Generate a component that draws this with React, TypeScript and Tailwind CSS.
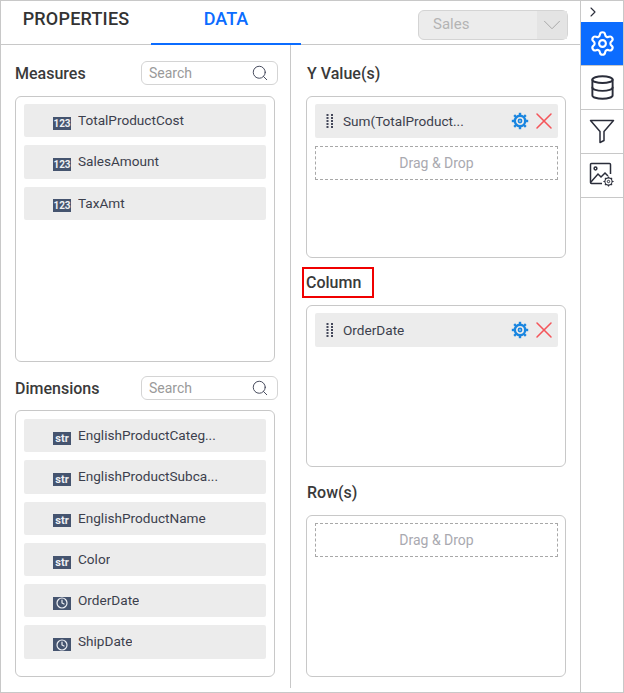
import React from "react";
import { Search, ChevronRight, ChevronDown, Settings, Database, X, Clock } from "lucide-react";

function Badge({ kind }: { kind: "123" | "str" | "date" }) {
  return (
    <span className={`mt-[5px] flex h-[13px] w-[18px] shrink-0 items-center justify-center bg-[#45546f] leading-[13px] font-bold text-[#eef0f4] ${kind === "123" ? "text-[10px]" : "text-[11px]"}`}>
      {kind === "date" ? <Clock size={12} strokeWidth={2.4} /> : kind}
    </span>
  );
}

function FieldItem({ kind, label }: { kind: "123" | "str" | "date"; label: string }) {
  return (
    <div className="flex h-[33.3px] items-center gap-[7px] rounded-[2px] bg-[#ececec] pl-[29px] text-[13.6px] text-[#3c3f4d]">
      <Badge kind={kind} />
      <span className="mb-[1px] truncate">{label}</span>
    </div>
  );
}

function Grip() {
  return (
    <svg width="8" height="14" viewBox="0 0 8 14" className="shrink-0" fill="#44485a">
      {[0, 3, 6, 9, 12].map((y) => (
        <React.Fragment key={y}>
          <rect x="0.5" y={y} width="2" height="2" />
          <rect x="5" y={y} width="2" height="2" />
        </React.Fragment>
      ))}
    </svg>
  );
}

function BlueGear() {
  return (
    <svg width="18" height="18" viewBox="0 0 18 18" className="shrink-0" fill="none" stroke="#1a86e0">
      <circle cx="9" cy="9" r="5.2" strokeWidth="2.4" />
      <circle cx="9" cy="9" r="1.6" strokeWidth="1.6" />
      <g strokeWidth="2.4">
        <path d="M9 0.8V3.4" />
        <path d="M9 14.6V17.2" />
        <path d="M0.8 9H3.4" />
        <path d="M14.6 9H17.2" />
        <path d="M3.2 3.2L5 5" />
        <path d="M13 13L14.8 14.8" />
        <path d="M14.8 3.2L13 5" />
        <path d="M5 13L3.2 14.8" />
      </g>
    </svg>
  );
}

function ValueItem({ label }: { label: string }) {
  return (
    <div className="flex h-[34px] items-center rounded-[2px] bg-[#ececec] pl-[11px] text-[13.6px] text-[#3c3f4d]">
      <Grip />
      <span className="ml-[9px] flex-1 truncate">{label}</span>
      <BlueGear />
      <X size={28} strokeWidth={1.3} className="ml-[1px] shrink-0 text-[#f4555a]" />
    </div>
  );
}

function DropZone() {
  return (
    <div className="flex h-[34px] items-center justify-center border border-dashed border-[#a8a8a8] text-[14px] text-[#a9a9b0]">
      Drag &amp; Drop
    </div>
  );
}

function SearchBox() {
  return (
    <div className="flex h-[24px] w-[137px] items-center justify-between rounded-[6px] border border-[#d4d4d4] pl-[7px] pr-[8px] text-[14px] text-[#9a9a9a]">
      <span>Search</span>
      <Search size={18} strokeWidth={1.3} className="text-[#44485a]" />
    </div>
  );
}

function Heading({ children }: { children: React.ReactNode }) {
  return <div className="h-[24px] text-[16px] leading-[26px] font-medium text-[#3a3a3a]">{children}</div>;
}

function FieldGroup({ title, listClass, children }: { title: string; listClass: string; children: React.ReactNode }) {
  return (
    <div>
      <div className="flex w-[263px] items-center justify-between">
        <Heading>{title}</Heading>
        <SearchBox />
      </div>
      <div className={`flex w-[260px] flex-col gap-2 rounded-[6px] border border-[#c8c8c8] px-2 ${listClass}`}>
        {children}
      </div>
    </div>
  );
}

function Well({ children }: { children?: React.ReactNode }) {
  return (
    <div className="flex h-[162px] w-[260px] flex-col gap-2 rounded-[6px] border border-[#c8c8c8] pb-2 pl-2 pr-[7px] pt-[7px]">
      {children}
    </div>
  );
}

function Funnel() {
  return (
    <svg width="26" height="26" viewBox="0 0 26 26" fill="none" stroke="#2a2d3a" strokeWidth="1.5" strokeLinejoin="round" className="mb-[2px]">
      <path d="M1.5 2.5H24.5L15 13.5V22.5L11 24.5V13.5Z" />
    </svg>
  );
}

function PictureGear() {
  return (
    <svg width="26" height="26" viewBox="0 0 26 26" fill="none" stroke="#2a2d3a" strokeWidth="1.5" className="mb-[2px]">
      <path d="M13 21.5H2.5a1 1 0 0 1-1-1V2.5a1 1 0 0 1 1-1h18a1 1 0 0 1 1 1V12" />
      <circle cx="6.5" cy="6.5" r="1.4" />
      <path d="M1.5 20.5L9 12l3 3 4-4 3 3" />
      <circle cx="19.5" cy="19.5" r="3.6" strokeWidth="1.1" />
      <circle cx="19.5" cy="19.5" r="1.2" strokeWidth="1" />
      <path strokeWidth="1.1" d="M19.5 14.4v1.5M19.5 23.1v1.5M14.4 19.5h1.5M23.1 19.5h1.5M15.9 15.9l1 1M22.1 22.1l1 1M23.1 15.9l-1 1M16.9 22.1l-1 1" />
    </svg>
  );
}

function RailCell({ active, children }: { active?: boolean; children: React.ReactNode }) {
  return (
    <div className={`flex h-[44px] items-center justify-center border-b border-[#c8c8c8] ${active ? "bg-[#0b6cff] text-white" : "text-[#2a2d3a]"}`}>
      {children}
    </div>
  );
}

export default function App() {
  return (
    <div className="flex h-[693px] w-[624px] border border-[#c8c8c8] bg-white font-['Roboto',sans-serif]">
      <div className="flex w-[579px] flex-col">
        <div className="flex h-[44px] items-center border-b border-[#c8c8c8]">
          <div className="flex h-[44px] w-[150px] items-center justify-center pb-[9px] text-[18px] tracking-[0.2px] font-medium text-[#333]">PROPERTIES</div>
          <div className="flex h-[44px] w-[150px] items-center justify-center border-b-2 border-[#0b6cff] pb-[7px] text-[18px] font-medium text-[#0b6cff]">DATA</div>
          <div className="ml-[117px] mt-[4px] flex h-[30px] w-[150px] items-center rounded-[6px] border border-[#d4d4d4] bg-[#ececec] text-[15px] text-[#b4b4b4]">
            <span className="flex-1 pl-[14px]">Sales</span>
            <span className="flex h-full w-[30px] items-center justify-center bg-[#e4e4e4]">
              <ChevronDown size={30} strokeWidth={0.8} className="text-[#a8a8a8]" />
            </span>
          </div>
        </div>
        <div className="flex h-[643px]">
          <div className="w-[290px] border-r border-[#c8c8c8] pl-[14px] pt-[16px]">
            <FieldGroup title="Measures" listClass="mt-[11px] h-[266px] pt-[7px]">
              <FieldItem kind="123" label="TotalProductCost" />
              <FieldItem kind="123" label="SalesAmount" />
              <FieldItem kind="123" label="TaxAmt" />
            </FieldGroup>
            <div className="h-[14px]" />
            <FieldGroup title="Dimensions" listClass="mt-[10px] h-[267px] pt-[8px]">
              <FieldItem kind="str" label="EnglishProductCateg..." />
              <FieldItem kind="str" label="EnglishProductSubca..." />
              <FieldItem kind="str" label="EnglishProductName" />
              <FieldItem kind="str" label="Color" />
              <FieldItem kind="date" label="OrderDate" />
              <FieldItem kind="date" label="ShipDate" />
            </FieldGroup>
          </div>
          <div className="pl-[15px] pt-[16px]">
            <div className="ml-px">
              <Heading>Y Value(s)</Heading>
            </div>
            <div className="mt-[11px]">
              <Well>
                <ValueItem label="Sum(TotalProduct..." />
                <DropZone />
              </Well>
            </div>
            <div className="-ml-[4px] mt-[9px] flex h-[31px] w-[72px] items-center border-2 border-[#f00000] pl-[2px] pt-[1px] text-[16px] font-medium text-[#3a3a3a]">
              Column
            </div>
            <div className="mt-[7px]">
              <Well>
                <ValueItem label="OrderDate" />
              </Well>
            </div>
            <div className="mt-[13px] ml-px">
              <Heading>Row(s)</Heading>
            </div>
            <div className="mt-[11px]">
              <Well>
                <DropZone />
              </Well>
            </div>
          </div>
        </div>
      </div>
      <div className="w-[43px] border-l border-[#c8c8c8]">
        <div className="flex h-[21px] items-center pl-[4px] text-[#2a2d3a]">
          <ChevronRight size={16} strokeWidth={1.6} />
        </div>
        <RailCell active><Settings size={27} strokeWidth={1.9} /></RailCell>
        <RailCell><Database size={27} strokeWidth={1.7} /></RailCell>
        <RailCell><Funnel /></RailCell>
        <RailCell><PictureGear /></RailCell>
      </div>
    </div>
  );
}
